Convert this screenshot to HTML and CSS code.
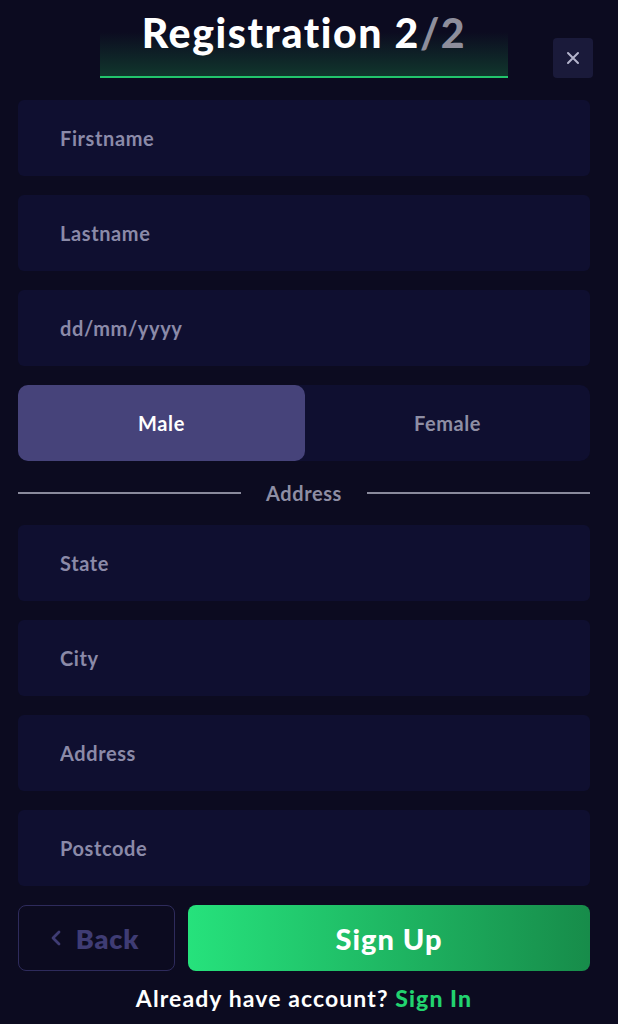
FILE: index.html
```html
<!DOCTYPE html>
<html lang="en">
<head>
    <meta charset="UTF-8">
    <meta name="viewport" content="width=device-width, initial-scale=1.0">
    <title>Registration</title>
    <link rel="stylesheet" href="styles.css">
</head>
<body>
    <div class="modal">
        <div class="header">
            <div class="title-box">
                <h2>Registration 2<span class="muted">/2</span></h2>
            </div>
            <button class="close">
                <svg width="16" height="16" viewBox="0 0 16 16">
                    <path d="M3 3L13 13M13 3L3 13" stroke="#b4b4cc" stroke-width="2" stroke-linecap="round"/>
                </svg>
            </button>
        </div>

        <div class="form">
            <input class="field" type="text" placeholder="Firstname">
            <input class="field" type="text" placeholder="Lastname">
            <input class="field" type="text" placeholder="dd/mm/yyyy">

            <div class="gender">
                <button class="gender-btn active">Male</button>
                <button class="gender-btn">Female</button>
            </div>

            <div class="divider">
                <span class="line"></span>
                <span class="divider-text">Address</span>
                <span class="line"></span>
            </div>

            <input class="field" type="text" placeholder="State">
            <input class="field" type="text" placeholder="City">
            <input class="field" type="text" placeholder="Address">
            <input class="field" type="text" placeholder="Postcode">
        </div>

        <div class="actions">
            <button class="back">
                <svg width="12" height="18" viewBox="0 0 12 18">
                    <path d="M9 3L3 9L9 15" fill="none" stroke="#3f3c74" stroke-width="2.8" stroke-linecap="round" stroke-linejoin="round"/>
                </svg>
                Back
            </button>
            <button class="signup">Sign Up</button>
        </div>
        <p class="signin">Already have account? <a href="#">Sign In</a></p>
    </div>
</body>
</html>
```

FILE: styles.css
```css
body {
    margin: 0;
    background-color: #0c0b20;
    font-family: Lato, "Noto Sans", sans-serif;
    color: white;
}
.modal {
    width: 572px;
    margin: 0 auto;
    padding: 0 28px 0 18px;
}
.header {
    display: flex;
    justify-content: space-between;
    align-items: flex-end;
    height: 78px;
}
.title-box {
    width: 408px;
    margin-left: 82px;
    height: 44px;
    border-bottom: 2px solid #22c46c;
    background: linear-gradient(to bottom, rgba(20, 70, 45, 0) 0%, rgba(20, 90, 55, 0.55) 100%);
    display: flex;
    justify-content: center;
    position: relative;
}
.title-box h2 {
    margin: 0;
    font-size: 41px;
    font-weight: 900;
    position: relative;
    top: -24px;
    letter-spacing: 1.6px;
    white-space: nowrap;
}
.muted {
    color: #8e8e9c;
}
.close {
    width: 40px;
    height: 40px;
    margin-right: -3px;
    background-color: #1a1a3a;
    border: none;
    border-radius: 4px;
    display: flex;
    align-items: center;
    justify-content: center;
    cursor: pointer;
}
.form {
    display: flex;
    flex-direction: column;
    gap: 19px;
    margin-top: 22px;
    width: 572px;
}
.field {
    height: 76px;
    box-sizing: border-box;
    padding: 0 42px;
    background-color: #0f0f30;
    border: none;
    border-radius: 6px;
    font-family: inherit;
    font-size: 20px;
    font-weight: 700;
    letter-spacing: 0.6px;
    color: white;
    outline: none;
}
.field::placeholder {
    color: #8b8aa8;
}
.gender {
    display: flex;
    height: 76px;
    background-color: #0f0f30;
    border-radius: 10px;
}
.gender-btn {
    flex: 1;
    border: none;
    background: none;
    font-family: inherit;
    font-size: 20px;
    font-weight: 700;
    letter-spacing: 0.6px;
    color: #8e8ea4;
    border-radius: 10px;
    cursor: pointer;
}
.gender-btn.active {
    flex: 0 0 287px;
    background-color: #46437a;
    color: white;
}
.divider {
    display: flex;
    align-items: center;
    gap: 25px;
    height: 44px;
    margin: -9px 0;
}
.line {
    flex: 1;
    height: 2px;
    background-color: #8a8a9c;
}
.divider-text {
    font-size: 20px;
    font-weight: 700;
    letter-spacing: 0.6px;
    color: #8e8ea4;
}
.actions {
    display: flex;
    gap: 13px;
    margin-top: 19px;
    width: 572px;
}
.back {
    width: 157px;
    height: 66px;
    background: none;
    border: 1px solid #2e2b5c;
    border-radius: 8px;
    font-family: inherit;
    font-size: 27px;
    font-weight: 800;
    letter-spacing: 0.8px;
    color: #3f3c74;
    display: flex;
    align-items: center;
    justify-content: center;
    gap: 14px;
    padding-right: 10px;
    cursor: pointer;
}
.signup {
    flex: 1;
    height: 66px;
    border: none;
    border-radius: 8px;
    background: linear-gradient(to right, #26e27c, #178c4a);
    font-family: inherit;
    font-size: 29px;
    font-weight: 900;
    letter-spacing: 1px;
    color: white;
    cursor: pointer;
}
.signin {
    width: 572px;
    margin: 13px 0 0;
    text-align: center;
    font-size: 23px;
    font-weight: 700;
    letter-spacing: 1.1px;
}
.signin a {
    color: #22d36f;
    text-decoration: none;
    font-weight: 900;
}
```
